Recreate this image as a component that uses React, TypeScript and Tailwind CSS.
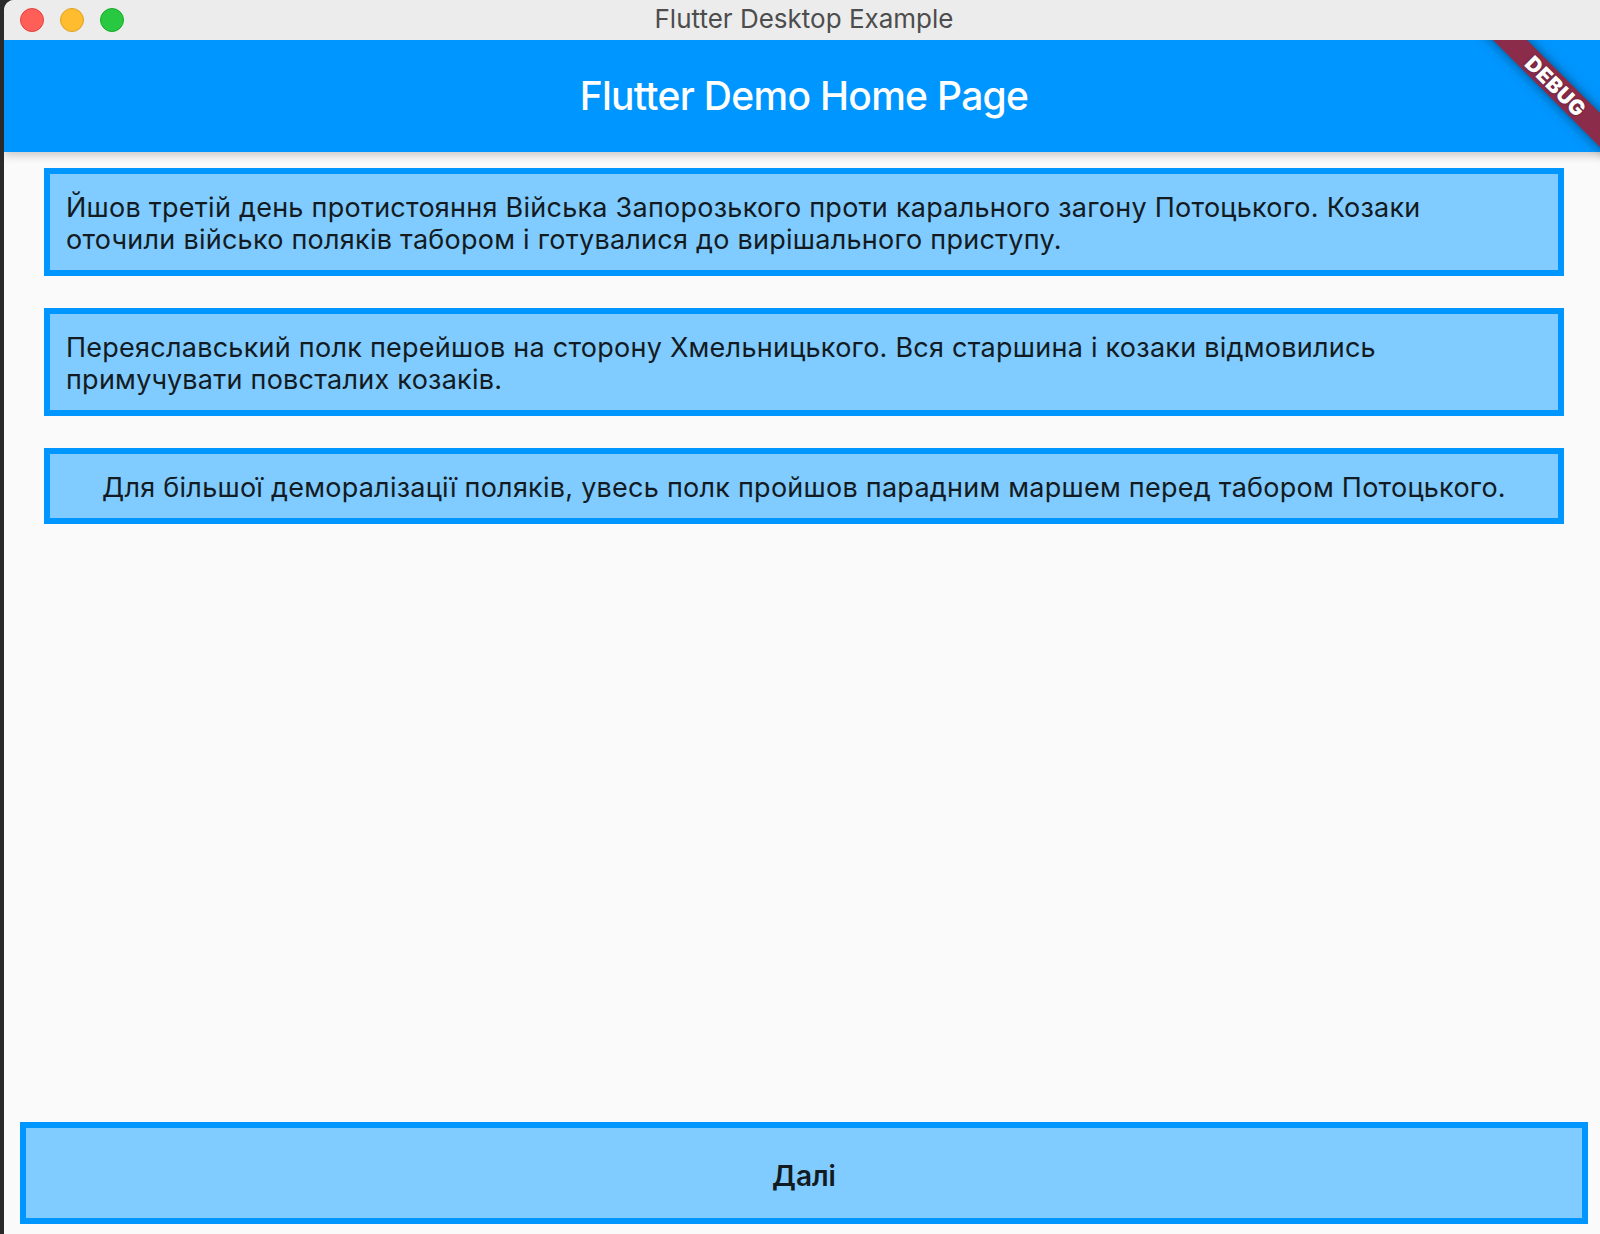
import React from "react";

const lines1 = [
  "Йшов третій день протистояння Війська Запорозького проти карального загону Потоцького. Козаки",
  "оточили військо поляків табором і готувалися до вирішального приступу.",
];
const lines2 = [
  "Переяславський полк перейшов на сторону Хмельницького. Вся старшина і козаки відмовились",
  "примучувати повсталих козаків.",
];
const line3 =
  "Для більшої деморалізації поляків, увесь полк пройшов парадним маршем перед табором Потоцького.";

function Box({ children, center }: { children: React.ReactNode; center?: boolean }) {
  return (
    <div
      className={`border-[6px] border-[#0096ff] bg-[#80cbff] px-[16px] pt-[18px] pb-[14px] text-[27px] leading-[32px] tracking-[0.25px] whitespace-nowrap text-[#131b22] ${
        center ? "text-center" : "text-left"
      }`}
    >
      {children}
    </div>
  );
}

export default function App() {
  return (
    <div
      className="relative h-[1234px] w-[1600px] overflow-hidden bg-[#2a2a2a]"
      style={{ fontFamily: "Inter, 'Noto Sans', sans-serif" }}
    >
      <div className="ml-[4px] flex h-full w-[1600px] flex-col overflow-hidden rounded-tl-[10px] bg-[#fafafa]">
        {/* title bar */}
        <div className="grid h-[40px] shrink-0 grid-cols-[1fr_auto_1fr] items-center bg-[#ececec]">
          <div className="flex items-center gap-[16px] pl-[16px]">
            <span className="h-[24px] w-[24px] rounded-full border border-[#e0443e] bg-[#ff5f57]" />
            <span className="h-[24px] w-[24px] rounded-full border border-[#dea123] bg-[#febc2e]" />
            <span className="h-[24px] w-[24px] rounded-full border border-[#1aab29] bg-[#28c840]" />
          </div>
          <div className="pb-[3px] text-[26px] leading-[37px] text-[#4d4d4d]">Flutter Desktop Example</div>
          <div />
        </div>

        {/* content */}
        <div className="relative flex flex-1 flex-col overflow-hidden">
          <div className="relative z-10 flex h-[112px] shrink-0 items-center justify-center bg-[#0096ff] shadow-[0_4px_8px_rgba(0,0,0,0.18)]">
            <span className="text-[39px] font-medium tracking-[-0.7px] text-white">Flutter Demo Home Page</span>
          </div>

          <div className="flex flex-1 flex-col gap-[32px] px-[40px] pt-[16px]">
            <Box>
              {lines1.map((l) => (
                <div key={l}>{l}</div>
              ))}
            </Box>
            <Box>
              {lines2.map((l) => (
                <div key={l}>{l}</div>
              ))}
            </Box>
            <Box center>{line3}</Box>
          </div>

          <div className="px-[16px] pb-[10px]">
            <div className="flex h-[102px] items-center justify-center border-[6px] border-[#0096ff] bg-[#80cbff] pt-[6px]">
              <span className="text-[28px] font-semibold text-[#131b22]">Далі</span>
            </div>
          </div>

          {/* debug banner */}
          <div className="absolute left-[1402px] top-[34px] z-20 flex h-[24px] w-[300px] rotate-45 items-center justify-center bg-[#8a2c4a] shadow-[0_0_12px_rgba(0,0,0,0.5)]">
            <span className="text-[21px] font-black leading-none tracking-[0.5px] text-white [text-shadow:0_0_2px_rgba(0,0,0,0.5)]">
              DEBUG
            </span>
          </div>
        </div>
      </div>
    </div>
  );
}
